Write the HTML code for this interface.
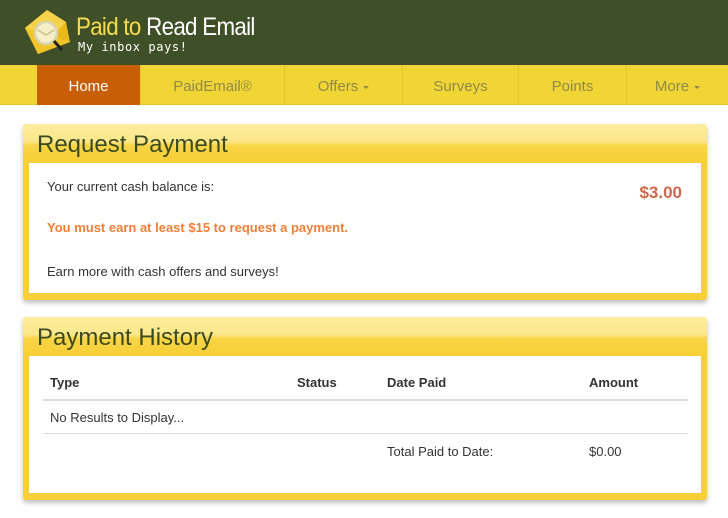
<!DOCTYPE html>
<html><head><meta charset="utf-8"><style>
*{margin:0;padding:0;box-sizing:border-box}
body{width:728px;height:518px;overflow:hidden;background:#fff;font-family:"Liberation Sans",sans-serif;position:relative}
.hdr{position:absolute;left:0;top:0;width:728px;height:65px;background:#3f4f27}
.nav{position:absolute;left:0;top:65px;width:728px;height:40px;background:#f1d534;border-bottom:1px solid #e6c82c}
.nav div{position:absolute;top:0;height:40px;line-height:44px;text-align:center;color:#8f8a4a;font-size:15px;border-left:1px solid #e4c62a}
.nav .home{background:#c85e05;color:#fff;border:none}
.car{display:inline-block;border-left:3px solid transparent;border-right:3px solid transparent;border-top:3px solid #8f8a4a;vertical-align:middle;margin-left:5px}
.panel{position:absolute;left:23px;width:684px;border-radius:3px;background:#f8cf36;box-shadow:0 3px 5px rgba(0,0,0,.25)}
.ph{height:39px;background:linear-gradient(#fdeea0 0,#fbe78a 45%,#f9d545 55%,#f8cf36 100%);border-radius:3px 3px 0 0;color:#3b4a1f;font-size:24px;padding-left:14px;line-height:42px}
.pb{position:absolute;left:6px;right:6px;background:#fff}
.t{position:absolute;font-size:13px;color:#333}
</style></head><body>
<div class="hdr">
<svg style="position:absolute;left:22px;top:6px" width="54" height="52" viewBox="0 0 54 52">
<path d="M3 22 L25 4 L44 16 L48 36 L16 48 Z" fill="#e9b81a"/>
<path d="M3 22 L25 4 L44 16 L30 30 Z" fill="#f6d34a"/>
<path d="M3 22 L30 30 L48 36 L16 48 Z" fill="#f0c42a"/>
<circle cx="24" cy="27" r="11" fill="#f5f0c8" stroke="#d8d3b0" stroke-width="2.5"/>
<path d="M16 24 L24 29 L32 24" stroke="#c9c08a" stroke-width="1.5" fill="none"/>
<path d="M32 35 L40 44" stroke="#222" stroke-width="3"/>
</svg>
<div style="position:absolute;left:76px;top:13px;font-size:25px;letter-spacing:-0.8px;color:#f6dc48;transform:scaleX(.895);transform-origin:left">Paid to <span style="color:#fff">Read Email</span></div>
<div style="position:absolute;left:78px;top:40px;font-family:'DejaVu Sans Mono',monospace;font-size:12px;color:#fff;letter-spacing:.6px">My inbox pays!</div>
</div>
<div class="nav">
<div class="home" style="left:37px;width:103px">Home</div>
<div style="left:140px;width:144px">PaidEmail®</div>
<div style="left:284px;width:118px">Offers<span class="car"></span></div>
<div style="left:402px;width:116px">Surveys</div>
<div style="left:518px;width:108px">Points</div>
<div style="left:626px;width:102px">More<span class="car"></span></div>
</div>

<div class="panel" style="top:124px;height:176px">
<div class="ph">Request Payment</div>
<div class="pb" style="top:39px;height:130px">
<div class="t" style="left:18px;top:16px">Your current cash balance is:</div>
<div class="t" style="right:19px;top:20px;font-size:17px;font-weight:bold;color:#d0664a">$3.00</div>
<div class="t" style="left:18px;top:57px;font-weight:bold;color:#ef7f36">You must earn at least $15 to request a payment.</div>
<div class="t" style="left:18px;top:101px">Earn more with cash offers and surveys!</div>
</div></div>

<div class="panel" style="top:317px;height:183px">
<div class="ph">Payment History</div>
<div class="pb" style="top:39px;height:137px">
<div class="t" style="left:21px;top:19px;font-weight:bold">Type</div>
<div class="t" style="left:268px;top:19px;font-weight:bold">Status</div>
<div class="t" style="left:358px;top:19px;font-weight:bold">Date Paid</div>
<div class="t" style="left:560px;top:19px;font-weight:bold">Amount</div>
<div style="position:absolute;left:14px;right:13px;top:43px;border-top:2px solid #ddd"></div>
<div class="t" style="left:21px;top:54px">No Results to Display...</div>
<div style="position:absolute;left:14px;right:13px;top:77px;border-top:1px solid #ddd"></div>
<div class="t" style="left:358px;top:88px">Total Paid to Date:</div>
<div class="t" style="left:560px;top:88px">$0.00</div>
</div></div>
</body></html>
